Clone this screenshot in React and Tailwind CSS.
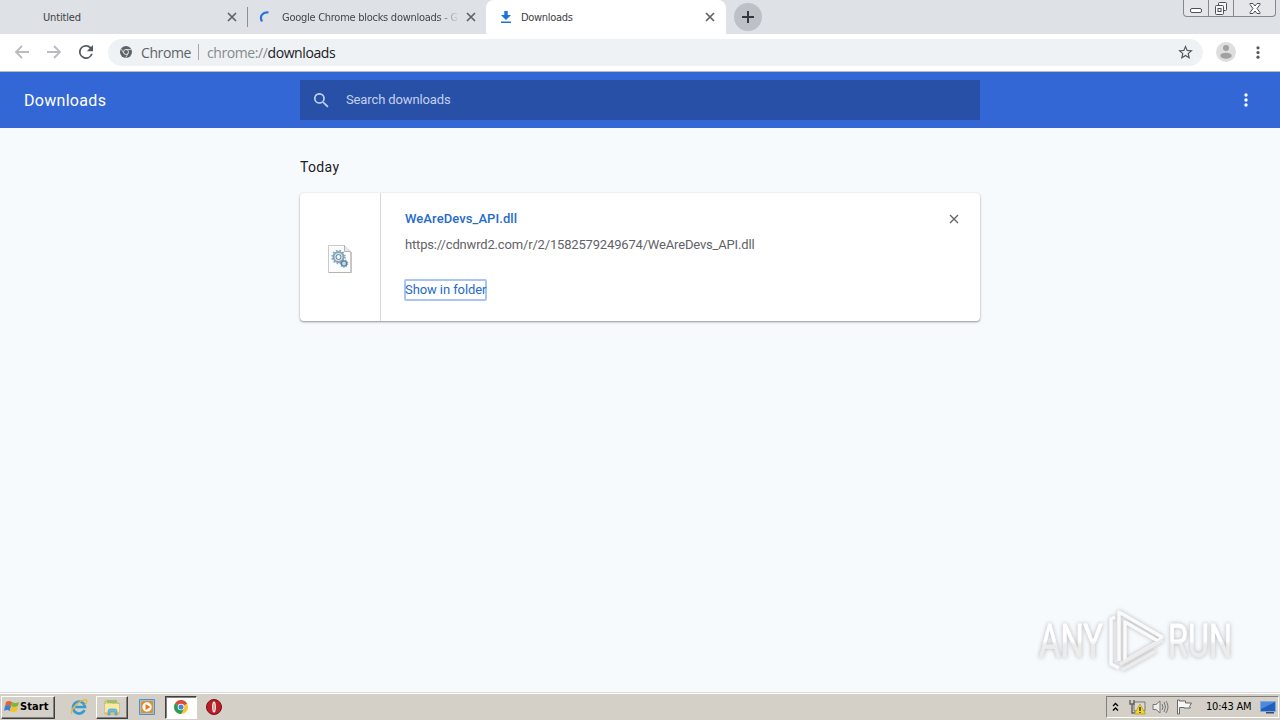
const CloseIcon = ({ className }) => (
  <svg viewBox="0 0 10 10" className={className} fill="none" stroke="currentColor">
    <path d="M1 1l8 8M9 1l-8 8" />
  </svg>
)

const DotsIcon = ({ className }) => (
  <svg viewBox="0 0 4 14" className={className} fill="currentColor">
    <circle cx="2" cy="2" r="1.7" />
    <circle cx="2" cy="7" r="1.7" />
    <circle cx="2" cy="12" r="1.7" />
  </svg>
)

const WindowControls = () => (
  <div className="mr-[4px] ml-auto flex h-[17px] w-[93px] rounded-b-[4px] border border-t-0 border-[#858891] bg-[#e4e6ea] text-[#4b505a]">
    <div className="flex w-[25px] items-end justify-center border-r border-[#858891] pb-[3px]">
      <div className="h-[5px] w-[12px] rounded-[2px] border border-current bg-white" />
    </div>
    <div className="flex w-[25px] justify-center border-r border-[#858891] pt-[2px]">
      <svg viewBox="0 0 14 13" className="h-[13px] w-[14px]" fill="#f5f6f8" stroke="currentColor">
        <rect x="4.500" y=".5" width="8" height="8" rx="1" />
        <rect x="1.500" y="3.500" width="8" height="9" rx="1" />
        <rect x="4" y="6.500" width="3" height="3" />
      </svg>
    </div>
    <div className="flex flex-1 justify-center pt-[3px]">
      <svg viewBox="0 0 12 11" className="h-[11px] w-[12px]" fill="#fff" stroke="currentColor">
        <path d="M1 .5h3L6 3 8 .5h3v1L8 5.500l3 4v1H8L6 8l-2 2.500H1v-1l3-4-3-4z" />
      </svg>
    </div>
  </div>
)

const TabStrip = () => (
  <div className="flex h-[34px] bg-[#dee1e6] font-['DejaVu_Sans_Condensed','DejaVu_Sans',sans-serif] text-[11px] leading-[34px] text-[#3c4043]">
    <div className="flex w-[247px] items-center pl-[43px]">
      <span className="pt-px tracking-[-0.15px]">Untitled</span>
      <CloseIcon className="mr-[10px] ml-auto h-[10px] w-[10px] stroke-[1.7] text-[#5f6368]" />
    </div>
    <div className="mt-[7px] h-5 w-px bg-[#8d9196]" />
    <div className="flex w-[238px] items-center pl-[11px]">
      <svg viewBox="0 0 12 14" className="h-[14px] w-3" fill="none" stroke="#2f72d6" strokeWidth="2.200">
        <path d="M3 11.500C0 6 4 1.500 9.500 2.500" />
      </svg>
      <span className="ml-[11px] w-[177px] overflow-hidden bg-linear-to-r from-[#3c4043] from-88% to-[#dee1e6] bg-clip-text pt-px tracking-[-0.27px] whitespace-nowrap text-transparent">
        Google Chrome blocks downloads - G
      </span>
      <CloseIcon className="mr-[10px] ml-auto h-[10px] w-[10px] stroke-[1.7] text-[#5f6368]" />
    </div>
    <div className="flex w-[240px] items-center rounded-t-[8px] bg-white pl-[15px]">
      <svg viewBox="0 0 10 12" className="h-3 w-[10px]" fill="#1a73d8">
        <path d="M3.300 0h3.400v4H10L5 9 0 4h3.300zM0 10.500h10V12H0z" />
      </svg>
      <span className="ml-[10px] pt-px tracking-[-0.3px]">Downloads</span>
      <CloseIcon className="mr-[11px] ml-auto h-[10px] w-[10px] stroke-[1.7] text-[#5f6368]" />
    </div>
    <div className="mt-[3px] ml-2 flex h-7 w-7 items-center justify-center rounded-full bg-[#bdc1c7]">
      <svg viewBox="0 0 12 12" className="h-3 w-3" stroke="#34373c" strokeWidth="2">
        <path d="M6 0v12M0 6h12" />
      </svg>
    </div>
    <WindowControls />
  </div>
)

const Toolbar = () => (
  <div className="flex h-[38px] items-center border-b border-[#b8bcc4] bg-white pb-px pl-[14px]">
    <svg viewBox="0 0 16 14" className="h-[14px] w-4" fill="none" stroke="#b9bbbe" strokeWidth="1.800">
      <path d="M15 7H2M8 1L2 7l6 6" />
    </svg>
    <svg viewBox="0 0 16 14" className="ml-4 h-[14px] w-4" fill="none" stroke="#b9bbbe" strokeWidth="1.800">
      <path d="M1 7h13M8 1l6 6-6 6" />
    </svg>
    <svg viewBox="4 4 16 16" className="ml-[17px] h-[14px] w-[14px]" fill="#55585c">
      <path d="M17.650 6.350A8 8 0 1 0 19.730 14h-2.080A6 6 0 1 1 12 6c1.660 0 3.140.690 4.220 1.780L13 11h7V4z" />
    </svg>
    <div className="ml-[15px] flex h-[27px] w-[1095px] items-center rounded-full bg-[#eff2f4] pl-[12px] font-['Open_Sans',sans-serif] text-[14px]">
      <svg viewBox="0 0 12 12" className="h-3 w-3">
        <circle cx="6" cy="6" r="6" fill="#5f6368" />
        <circle cx="6" cy="6" r="2.500" fill="none" stroke="#e6e9eb" strokeWidth=".9" />
        <path d="M6 3.500h5.300M3.800 7.200L1.200 3M8.200 7.200L5.700 11.800" stroke="#e6e9eb" strokeWidth=".8" />
      </svg>
      <span className="ml-[9px] w-[49px] tracking-[-0.4px] text-[#5f6368]">Chrome</span>
      <div className="mx-2 h-4 w-px bg-[#a4a8ac]" />
      <span className="tracking-[-0.41px] text-[#85898d]">
        chrome://<span className="text-[#202124]">downloads</span>
      </span>
      <svg viewBox="2 2 20 19" className="mr-[10px] ml-auto h-[14px] w-[15px]" fill="#55585c">
        <path d="M22 9.240l-7.190-.620L12 2 9.190 8.630 2 9.240l5.460 4.730L5.820 21 12 17.270 18.180 21l-1.630-7.030zM12 15.400l-3.760 2.270 1-4.280-3.320-2.880 4.380-.380L12 6.100l1.710 4.040 4.380.380-3.320 2.880 1 4.280z" />
      </svg>
    </div>
    <svg viewBox="0 0 20 20" className="ml-[13px] h-5 w-5">
      <circle cx="10" cy="10" r="10" fill="#dedede" />
      <circle cx="10" cy="6" r="3" fill="#a1a1a1" />
      <ellipse cx="10" cy="13.700" rx="5.700" ry="3" fill="#a1a1a1" />
    </svg>
    <DotsIcon className="ml-[20px] h-[13px] w-1 text-[#55585c]" />
  </div>
)

const Header = () => (
  <div className="flex h-14 items-center bg-[#3367d6] pl-6 text-white">
    <h1 className="w-[276px] pt-[2px] text-[16px] tracking-[0.3px]">Downloads</h1>
    <div className="flex h-10 w-[680px] items-center bg-[#2850a7] pl-[14px] text-[13px] text-[#c3d1f0]">
      <svg viewBox="3 3 18 18" className="h-[15px] w-[15px]" fill="currentColor">
        <path d="M15.500 14h-.790l-.280-.270A6.500 6.500 0 1 0 13.730 14.430l.270.280v.790l5 4.990L20.490 19zM9.500 14a4.500 4.500 0 1 1 0-9 4.500 4.500 0 0 1 0 9z" />
      </svg>
      <span className="ml-[17px] tracking-[-0.12px]">Search downloads</span>
    </div>
    <DotsIcon className="ml-[264px] h-[14px] w-1" />
  </div>
)

const DllIcon = () => (
  <svg viewBox="0 0 24 28" className="h-7 w-6">
    <path d="M.5.500h16l6 6v21H.5z" fill="#fbfcfd" stroke="#c9c9c7" />
    <path d="M23.500 7v20.500H1" fill="none" stroke="#b5a99d" strokeWidth=".7" />
    <path d="M16.500.500v6h6" fill="#e6e8e9" stroke="#b0b2b3" />
    <circle cx="10.500" cy="12" r="5" fill="#dbe7ee" stroke="#85a3b7" strokeWidth="2" />
    <circle cx="10.500" cy="12" r="6.500" fill="none" stroke="#8ba7b9" strokeWidth="1.500" strokeDasharray="1.700 1.700" />
    <circle cx="10.500" cy="12" r="2.500" fill="#f1f5f7" stroke="#5e8199" />
    <circle cx="16" cy="18.500" r="2.600" fill="#c8dbe8" stroke="#587f9b" strokeWidth="1.400" />
    <circle cx="16" cy="18.500" r="3.700" fill="none" stroke="#789aaf" strokeWidth="1.200" strokeDasharray="1.300 1.300" />
  </svg>
)

const DownloadCard = () => (
  <div className="flex h-32 w-[680px] rounded-[4px] bg-white text-[13px] shadow-[0_1px_2px_rgba(60,64,67,0.45),0_1px_3px_rgba(60,64,67,0.15)]">
    <div className="flex w-[81px] items-center justify-center border-r border-[#d5d7d9] pt-[3px]">
      <DllIcon />
    </div>
    <div className="flex flex-1 flex-col items-start pt-[17px] pl-6 leading-[18px]">
      <a className="font-medium tracking-[0.08px] text-[#256cc7]">WeAreDevs_API.dll</a>
      <span className="mt-2 tracking-[-0.17px] text-[#5f6368]">
        https://cdnwrd2.com/r/2/1582579249674/WeAreDevs_API.dll
      </span>
      <a className="mt-[25px] -ml-px h-[22px] w-[83px] rounded-[2px] border-2 border-[#a9c5f7] leading-[17px] tracking-[-0.09px] whitespace-nowrap text-[#256cc7]">
        <span className="-ml-px">Show in folder</span>
      </a>
    </div>
    <CloseIcon className="mt-[21px] mr-[21px] h-[10px] w-[10px] stroke-[1.3] text-[#5f6368]" />
  </div>
)

const Watermark = () => (
  <svg viewBox="0 0 220 80" className="absolute top-[600px] left-[1026px] h-[80px] w-[220px] drop-shadow-[0_0_2px_rgba(80,80,80,0.4)]">
    <defs>
      <linearGradient id="fade" x1="0" y1="0" x2="0" y2="1">
        <stop offset="50%" stopColor="#fff" />
        <stop offset="58%" stopColor="#ececec" />
      </linearGradient>
    </defs>
    <g fill="url(#fade)" stroke="url(#fade)" strokeWidth=".8" className="font-['Roboto',sans-serif] text-[47px]">
      <text x="13" y="57" textLength="64" lengthAdjust="spacingAndGlyphs">ANY</text>
      <text x="142" y="57" textLength="64" lengthAdjust="spacingAndGlyphs">RUN</text>
    </g>
    <g fill="none" stroke="#fafafa" strokeWidth="3.500" strokeLinejoin="round">
      <path d="M89 17l-4 2v45l8 4" />
      <path d="M93 61V12l43 25-4 4-33-19v39l31-18" />
      <path d="M94 64l43-24M96 70l34-19" stroke="#ececec" />
    </g>
  </svg>
)

const ExplorerIcon = () => (
  <svg viewBox="0 0 18 18" className="h-[18px] w-[18px]">
    <path d="M2 3h6l1 2h7v11H2z" fill="#ecd579" stroke="#c6a84f" strokeWidth=".7" />
    <path d="M4 2h10v3H4z" fill="#92c478" />
    <path d="M2 6h14v8H2z" fill="#f8e9a4" />
    <path d="M5 17v-4q0-2 2-2h5q2 0 2 2v4h-2v-3H7v3z" fill="#70bddd" stroke="#4499c4" strokeWidth=".6" />
  </svg>
)

const ChromeIcon = () => (
  <svg viewBox="0 0 16 16" className="h-[14px] w-[14px]">
    <circle cx="8" cy="8" r="8" fill="#f7c52c" />
    <path d="M8 8L1.100 4A8 8 0 0 1 15 4z" fill="#db4b3d" />
    <path d="M1.100 4A8 8 0 0 0 8 16l3.500-6L8 8z" fill="#269c59" />
    <circle cx="8" cy="8" r="3.800" fill="#fff" />
    <circle cx="8" cy="8" r="2.900" fill="#4a83df" />
  </svg>
)

const Tray = () => (
  <div className="mr-px ml-auto flex h-[22px] w-[173px] items-center border border-t-[#808080] border-r-white border-b-white border-l-[#808080] pl-[5px]">
    <svg viewBox="0 0 7 10" className="h-[10px] w-[7px]" fill="none" stroke="#000" strokeWidth="1.400">
      <path d="M1 4l2.500-2.500L6 4M1 8.500L3.500 6 6 8.500" />
    </svg>
    <svg viewBox="0 0 17 16" className="ml-[10px] h-4 w-[17px]">
      <path d="M5 3h11v9H5z" fill="#d8d8d5" stroke="#777" />
      <path d="M1 1v4h4V1M3 5v9h3" fill="none" stroke="#626262" strokeWidth="1.400" />
      <path d="M11 5l5.500 10h-11z" fill="#f5d52b" stroke="#b29510" strokeWidth=".7" />
      <path d="M11 8v4M11 13v1" stroke="#222" strokeWidth="1.300" />
    </svg>
    <svg viewBox="0 0 17 16" className="ml-[6px] h-4 w-[17px]" fill="#eee" stroke="#777">
      <path d="M1 5.500h3L8 2v12l-4-3.500H1z" />
      <path d="M10 5q2 3 0 6M12 3q3 5 0 10M14 2q4 6 0 12" fill="none" />
    </svg>
    <svg viewBox="0 0 17 16" className="ml-[7px] h-4 w-[17px]" fill="#f7f7f7" stroke="#686868">
      <path d="M1.500 15V1h2v1h6v2h6l-2 3.500 1 1.500H8V8.500H3.500V15z" />
    </svg>
    <span className="ml-[13px] w-[47px] font-['DejaVu_Sans_Condensed','DejaVu_Sans',sans-serif] text-[11px] tracking-[-0.2px] whitespace-nowrap text-black">
      10:43 AM
    </span>
    <svg viewBox="0 0 16 14" className="ml-[7px] h-[14px] w-4">
      <path d="M.5 1.500h15v10H.5z" fill="#215fbd" stroke="#85a7d5" />
      <path d="M1 2h14L1 9z" fill="#4d8bda" />
      <path d="M6 12h8v1.500H6z" fill="#334c70" />
    </svg>
  </div>
)

const Taskbar = () => (
  <div className="flex h-7 items-center border-t border-[#dedbd6] bg-[#d4d0c8] pt-px shadow-[inset_0_1px_0_#fff]">
    <button className="ml-px flex h-[23px] w-[54px] items-center border border-t-white border-r-[#404040] border-b-[#404040] border-l-white pl-[2px] font-['DejaVu_Sans_Condensed','DejaVu_Sans',sans-serif] text-[11px] font-bold text-black shadow-[inset_-1px_-1px_0_#808080]">
      <svg viewBox="0 0 16 16" className="h-[16px] w-[16px] shrink-0">
        <path d="M2 3q3-2 6 0L7 7Q4 5 1 7z" fill="#e8642c" />
        <path d="M8 3q3 2 7 0l-1 4q-4 2-7 0z" fill="#7cb543" />
        <path d="M1 7q3-2 6 0l-1 5q-3-2-6 0z" fill="#3e80cf" />
        <path d="M7 7q3 2 7 0l-1 5q-4 2-7 0z" fill="#f1c22c" />
      </svg>
      <span className="tracking-[0.1px]">Start</span>
    </button>
    <svg viewBox="0 0 18 18" className="ml-[15px] h-[18px] w-[18px]" fill="none">
      <path d="M14.500 12A6 6 0 1 1 15 9H5" stroke="#389bd5" strokeWidth="2.700" />
      <path d="M2 16C-1 12 11 1 16 2q2 1-1 5" stroke="#e7b83b" strokeWidth="1.400" />
    </svg>
    <div className="ml-2 flex h-[23px] w-8 items-center justify-center border border-t-white border-r-[#404040] border-b-[#404040] border-l-white shadow-[inset_-1px_-1px_0_#808080]">
      <ExplorerIcon />
    </div>
    <svg viewBox="0 0 16 16" className="ml-[11px] h-4 w-4">
      <path d="M.5.500h15v15H.5z" fill="#90c6ed" stroke="#4c91c9" />
      <path d="M3 2h11v12H2V3z" fill="#f08c1d" />
      <circle cx="8" cy="8" r="4.700" fill="#fff" />
      <path d="M6.500 5l5 3-5 3z" fill="#e77914" />
    </svg>
    <div className="ml-[10px] flex h-[23px] w-8 items-center justify-center border border-t-[#404040] border-r-white border-b-white border-l-[#404040] bg-white shadow-[inset_1px_1px_0_#808080]">
      <ChromeIcon />
    </div>
    <svg viewBox="0 0 16 16" className="ml-[9px] h-4 w-4">
      <circle cx="8" cy="8" r="7.500" fill="#b91e25" stroke="#781014" />
      <ellipse cx="8" cy="8" rx="1.900" ry="5.500" fill="#f5eeee" />
      <ellipse cx="8" cy="8" rx=".6" ry="4" fill="#b9777a" />
    </svg>
    <Tray />
  </div>
)

export default function App() {
  return (
    <div className="relative flex h-[720px] w-[1280px] flex-col overflow-hidden bg-[#f7fafd] font-['Roboto',sans-serif]">
      <TabStrip />
      <Toolbar />
      <Header />
      <main className="flex-1 pl-[300px]">
        <h2 className="mt-[29px] mb-[16px] text-[14px] leading-5 tracking-[0.35px] text-[#202124]">Today</h2>
        <DownloadCard />
      </main>
      <Taskbar />
      <Watermark />
    </div>
  )
}
